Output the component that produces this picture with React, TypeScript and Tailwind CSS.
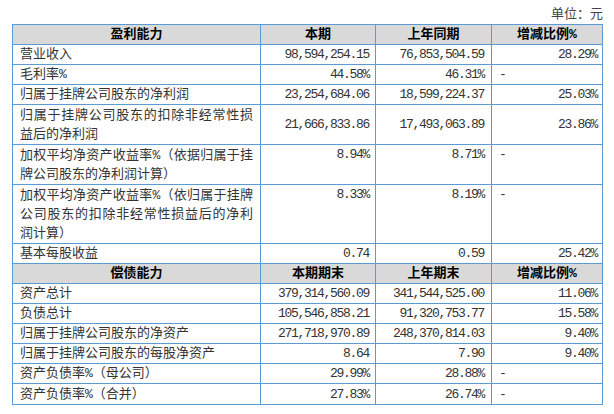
import React from 'react';

type Row = {
  label: string[];
  cur: string;
  prev: string;
  change: string;
  h?: string;
  align?: 'center' | 'top';
};

const profitRows: Row[] = [
  { label: ['营业收入'], cur: '98,594,254.15', prev: '76,853,504.59', change: '28.29%' },
  { label: ['毛利率%'], cur: '44.58%', prev: '46.31%', change: '-' },
  { label: ['归属于挂牌公司股东的净利润'], cur: '23,254,684.06', prev: '18,599,224.37', change: '25.03%' },
  {
    label: ['归属于挂牌公司股东的扣除非经常性损', '益后的净利润'],
    cur: '21,666,833.86',
    prev: '17,493,063.89',
    change: '23.86%',
    h: 'h-[40px]',
  },
  {
    label: ['加权平均净资产收益率%（依据归属于挂', '牌公司股东的净利润计算）'],
    cur: '8.94%',
    prev: '8.71%',
    change: '-',
    h: 'h-[40px]',
    align: 'top',
  },
  {
    label: ['加权平均净资产收益率%（依归属于挂牌', '公司股东的扣除非经常性损益后的净利', '润计算）'],
    cur: '8.33%',
    prev: '8.19%',
    change: '-',
    h: 'h-[59px]',
    align: 'top',
  },
  { label: ['基本每股收益'], cur: '0.74', prev: '0.59', change: '25.42%' },
];

const debtRows: Row[] = [
  { label: ['资产总计'], cur: '379,314,560.09', prev: '341,544,525.00', change: '11.06%' },
  { label: ['负债总计'], cur: '105,546,858.21', prev: '91,320,753.77', change: '15.58%' },
  { label: ['归属于挂牌公司股东的净资产'], cur: '271,718,970.89', prev: '248,370,814.03', change: '9.40%' },
  { label: ['归属于挂牌公司股东的每股净资产'], cur: '8.64', prev: '7.90', change: '9.40%' },
  { label: ['资产负债率%（母公司）'], cur: '29.99%', prev: '28.88%', change: '-' },
  { label: ['资产负债率%（合并）'], cur: '27.83%', prev: '26.74%', change: '-', h: 'h-[21px]' },
];

const cjk = "font-['Liberation_Mono','Noto_Sans_CJK_SC',monospace]";
const num = "font-['Liberation_Mono',monospace] tracking-[-1.3px]";

const HeaderRow = ({ cols }: { cols: string[] }) => (
  <div className="grid h-[20px] grid-cols-[248px_115px_116px_110px] border-b border-[#5b9bd5] bg-[#d9d9d9] text-[13px] leading-[19px] font-bold text-black">
    {cols.map((c, i) => (
      <div
        key={c}
        className={`flex items-center justify-center ${cjk} ${i < 3 ? 'border-r border-[#5b9bd5]' : ''}`}
      >
        {c}
      </div>
    ))}
  </div>
);

const DataRow = ({ row }: { row: Row }) => {
  const top = row.align === 'top';
  const v = top ? 'items-start' : 'items-center';
  return (
    <div
      className={`grid grid-cols-[248px_115px_116px_110px] border-b border-[#5b9bd5] text-[13px] leading-[19px] text-[#333] ${row.h ?? 'h-[20px]'}`}
    >
      <div className={`flex flex-col justify-center border-r border-[#5b9bd5] px-[7px] ${cjk}`}>
        {row.label.map((line, i) => (
          <div
            key={line}
            className={i < row.label.length - 1 ? 'text-justify [text-align-last:justify]' : ''}
          >
            {line}
          </div>
        ))}
      </div>
      <div className={`flex justify-end border-r border-[#5b9bd5] pr-[6px] ${v} ${num}`}>{row.cur}</div>
      <div className={`flex justify-end border-r border-[#5b9bd5] pr-[7px] ${v} ${num}`}>{row.prev}</div>
      {row.change === '-' ? (
        <div className={`flex justify-start pl-[7px] ${v} ${num}`}>-</div>
      ) : (
        <div className={`flex justify-end pr-[5px] ${v} ${num}`}>{row.change}</div>
      )}
    </div>
  );
};

export default function App() {
  return (
    <div className="h-[414px] w-[614px] bg-white">
      <div className={`ml-[12px] h-[24px] w-[591px] pt-[5px] text-right text-[13px] leading-[19px] text-[#444] ${cjk}`}>
        单位：元
      </div>
      <div className="ml-[12px] w-[591px] border-x border-t border-[#5b9bd5]">
        <HeaderRow cols={['盈利能力', '本期', '上年同期', '增减比例%']} />
        {profitRows.map((r) => (
          <DataRow key={r.label.join('')} row={r} />
        ))}
        <HeaderRow cols={['偿债能力', '本期期末', '上年期末', '增减比例%']} />
        {debtRows.map((r) => (
          <DataRow key={r.label.join('')} row={r} />
        ))}
      </div>
    </div>
  );
}
